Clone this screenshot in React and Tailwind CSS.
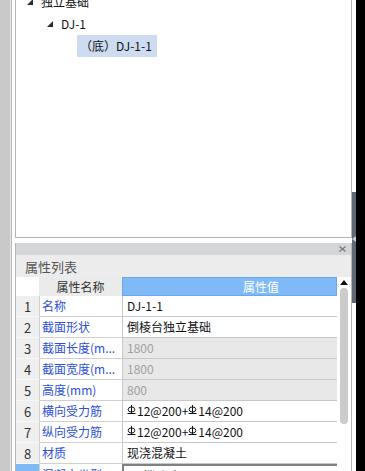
import React from "react";

const FONT = { fontFamily: '"Noto Sans CJK SC", "Noto Sans", sans-serif' };

function Tri() {
  return (
    <svg width="6" height="6" viewBox="0 0 6 6" className="shrink-0">
      <polygon points="6,0 6,6 0,6" fill="#2a2a2a" />
    </svg>
  );
}

function Rebar() {
  return (
    <svg width="9" height="10" viewBox="0 0 9 10" className="inline-block shrink-0 -mt-[3px] mr-[1px]">
      <ellipse cx="4.5" cy="4.5" rx="3.3" ry="2.6" fill="none" stroke="#111" strokeWidth="1" />
      <line x1="4.5" y1="0" x2="4.5" y2="9" stroke="#111" strokeWidth="1" />
      <line x1="0.5" y1="8.5" x2="8.5" y2="8.5" stroke="#111" strokeWidth="1" />
    </svg>
  );
}

const rows = [
  { n: 1, name: "名称", value: "DJ-1-1" },
  { n: 2, name: "截面形状", value: "倒棱台独立基础" },
  { n: 3, name: "截面长度(m...", value: "1800", ro: true },
  { n: 4, name: "截面宽度(m...", value: "1800", ro: true },
  { n: 5, name: "高度(mm)", value: "800", ro: true },
  { n: 6, name: "横向受力筋", rebar: true },
  { n: 7, name: "纵向受力筋", rebar: true },
  { n: 8, name: "材质", value: "现浇混凝土" },
];

export default function App() {
  return (
    <div className="w-[365px] h-[471px] flex overflow-hidden bg-white text-[12px] leading-none" style={FONT}>
      <div className="w-[10px] shrink-0 bg-[#c9c9c9]" />
      <div className="w-[1px] shrink-0 bg-[#e6e6e6]" />
      <div className="w-[1px] shrink-0 bg-[#b9b9b9]" />
      <div className="w-[3px] shrink-0 bg-white" />
      <div className="w-[337px] shrink-0 flex flex-col">
        {/* tree panel */}
        <div className="h-[238px] shrink-0 border-l border-r border-b border-[#b4b4b4] bg-white overflow-hidden">
          <div className="-mt-[9px] flex flex-col text-[#111]">
            <div className="h-[22px] flex items-center">
              <div className="w-[11px]" />
              <Tri />
              <div className="w-[8px]" />
              <span>独立基础</span>
            </div>
            <div className="h-[22px] flex items-center">
              <div className="w-[31px]" />
              <Tri />
              <div className="w-[8px]" />
              <span>DJ-1</span>
            </div>
            <div className="h-[22px] flex items-center">
              <div className="w-[61px]" />
              <div className="h-[22px] w-[80px] bg-[#cddcf0] flex items-center pl-[3px]">
                <span>（底）DJ-1-1</span>
              </div>
            </div>
          </div>
        </div>
        <div className="h-[5px] shrink-0 bg-white" />
        {/* property panel */}
        <div className="h-[228px] shrink-0 border-l border-r border-[#b4b4b4] flex flex-col overflow-hidden">
          <div className="h-[12px] shrink-0 bg-[#d4d6da] flex items-center justify-end pr-[5px]">
            <svg width="7" height="6" viewBox="0 0 7 6">
              <path d="M0.5 0.5 L6.5 5.5 M6.5 0.5 L0.5 5.5" stroke="#7a7a7a" strokeWidth="1.3" />
            </svg>
          </div>
          <div className="h-[22px] shrink-0 bg-[#ececec] flex items-center pl-[9px] text-[#555] text-[13px]">属性列表</div>
          <div className="flex shrink-0">
            <div className="w-[321px] flex flex-col">
              <div className="h-[19px] shrink-0 flex">
                <div className="w-[23px] bg-white" />
                <div className="w-[83px] bg-[#ebebeb] flex items-center justify-center text-[#333]">属性名称</div>
                <div className="w-[215px] bg-[#80baf6] border border-[#6aa8ee] flex items-center pl-[120px] text-white">属性值</div>
              </div>
              {rows.map((r) => (
                <div key={r.n} className="h-[21px] shrink-0 flex">
                  <div className="w-[23px] bg-[#efefef] border-b border-[#f8f8f8] flex items-center justify-center text-[#333] text-[13px]">{r.n}</div>
                  <div className="w-[83px] border-l border-b border-[#d0d0d0] bg-white flex items-center pl-[2px] text-[#2d4fd8] whitespace-nowrap overflow-hidden">{r.name}</div>
                  <div className={`w-[215px] border-l border-b border-[#c8c8c8] flex items-center pl-[4px] whitespace-nowrap ${r.ro ? "bg-[#e8e8e8] text-[#a0a0a0]" : "bg-white text-[#111]"}`}>
                    {r.rebar ? (
                      <span className="flex items-center">
                        <Rebar />
                        <span>12@200+</span>
                        <Rebar />
                        <span>14@200</span>
                      </span>
                    ) : (
                      r.value
                    )}
                  </div>
                </div>
              ))}
              <div className="h-[21px] shrink-0 flex">
                <div className="w-[23px] bg-[#80baf6]" />
                <div className="w-[83px] border-l border-[#d0d0d0] bg-white flex items-center pl-[2px] text-[#2d4fd8] whitespace-nowrap overflow-hidden">混凝土类型</div>
                <div className="w-[215px] border-l-2 border-t-2 border-[#808080] bg-white flex items-center pl-[3px] text-[#111] whitespace-nowrap">(预拌砼碎石)</div>
              </div>
            </div>
            <div className="w-[14px] bg-white flex flex-col items-center">
              <svg width="8" height="5" viewBox="0 0 8 5" className="mt-[3px] mr-[1px]">
                <polygon points="4,0 8,5 0,5" fill="#111" />
              </svg>
              <div className="mt-[3px] mr-[1px] w-[8px] h-[136px] rounded-[4px] bg-[#cbcbcb]" />
            </div>
          </div>
        </div>
      </div>
      <div className="w-[4px] shrink-0 flex flex-col bg-white">
        <div className="h-[192px] shrink-0" />
        <div className="h-[111px] shrink-0 bg-[#5e6974] flex flex-col items-center">
          <div className="h-[44px] shrink-0" />
          <svg width="4" height="6" viewBox="0 0 4 6">
            <polygon points="0,3 4,0 4,6" fill="#c8ccd0" />
          </svg>
        </div>
      </div>
      <div className="w-[9px] shrink-0 bg-black" />
    </div>
  );
}
